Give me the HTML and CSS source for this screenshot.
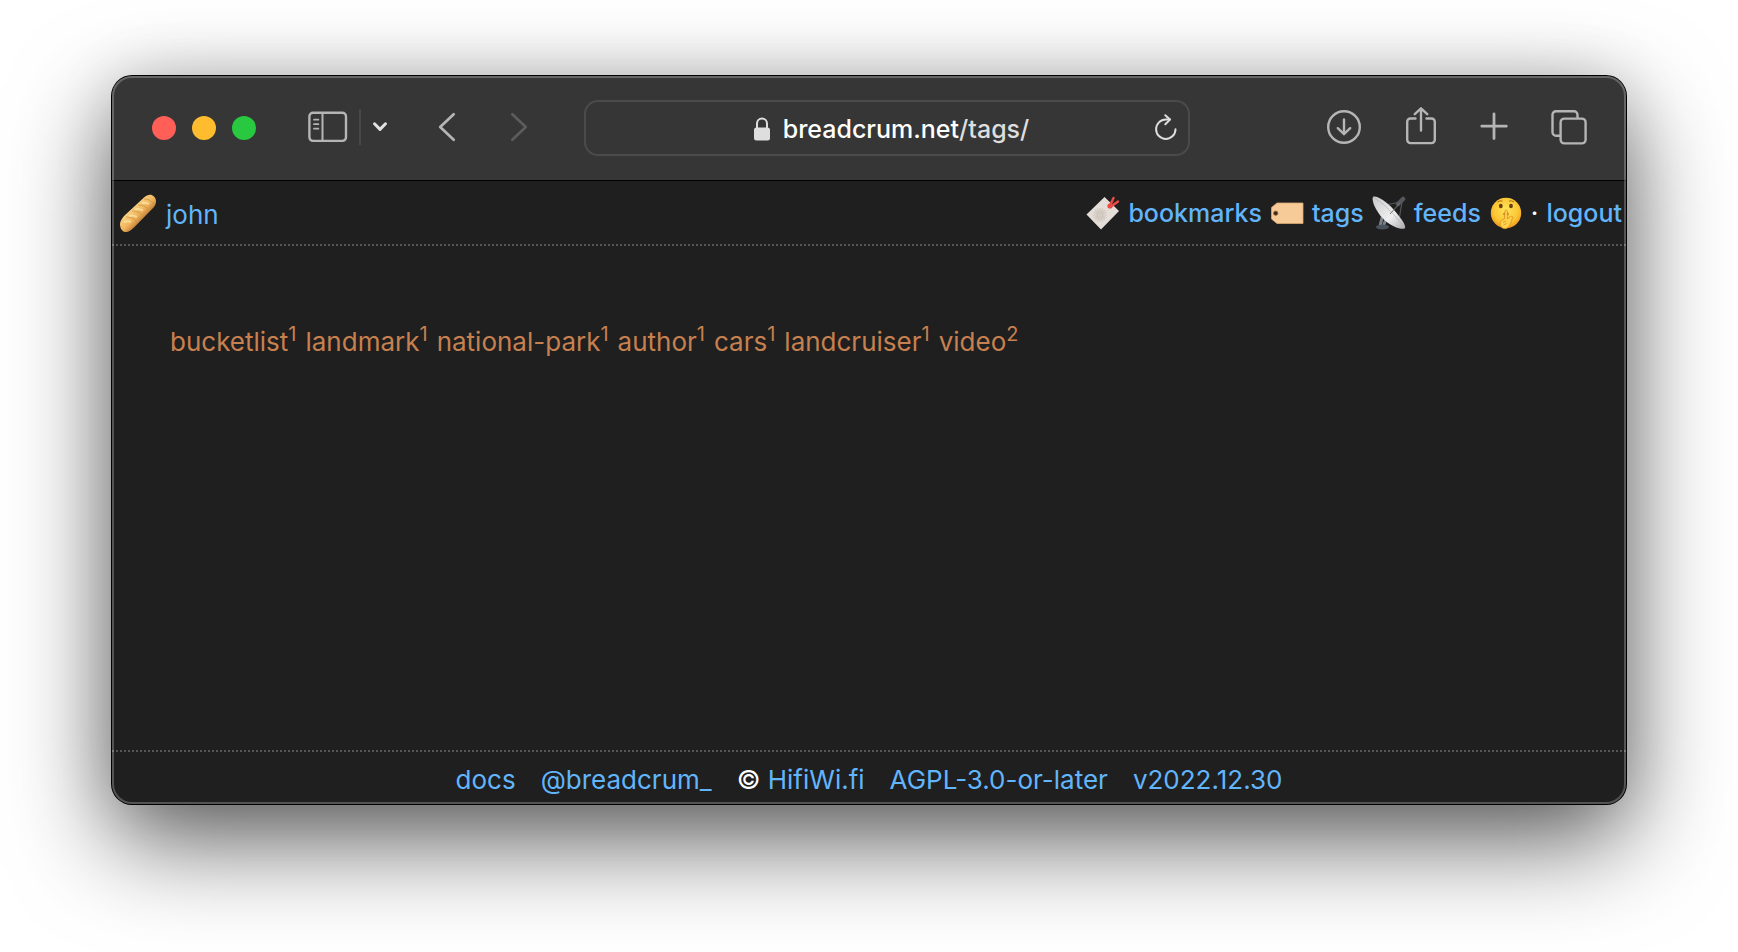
FILE: index.html
```html
<!DOCTYPE html>
<html lang="en">
<head>
<meta charset="utf-8">
<title>Tags</title>
<link rel="stylesheet" href="styles.css">
</head>
<body>
<div class="window">
  <div class="toolbar">
    <div class="lights">
      <button class="light light-close" aria-label="Close"></button>
      <button class="light light-minimize" aria-label="Minimize"></button>
      <button class="light light-zoom" aria-label="Zoom"></button>
    </div>
    <div class="sidebar-tools">
      <button class="tool" aria-label="Show sidebar">
        <svg width="40" height="32" viewBox="0 0 40 32" fill="none" stroke="#b5b5b5" stroke-width="2.4" stroke-linecap="round"><rect x="1.4" y="1.7" width="36.600" height="28.2" rx="3.6"/><path d="M14.5 2v28" stroke-width="2"/><path d="M6 8.7h4.4M6 13.2h4.4M6 17.7h4.4" stroke-width="1.7"/></svg>
      </button>
      <span class="divider"></span>
      <button class="tool" aria-label="Sidebar menu">
        <svg width="16" height="12" viewBox="0 0 16 12" fill="none" stroke="#e2e2e2" stroke-width="3" stroke-linecap="round" stroke-linejoin="round"><path d="M2.5 2.8L8 8.4l5.500-5.600"/></svg>
      </button>
    </div>
    <div class="history">
      <button class="tool" aria-label="Back">
        <svg width="18" height="30" viewBox="0 0 18 30" fill="none" stroke="#b5b5b5" stroke-width="2.700" stroke-linecap="round" stroke-linejoin="round"><path d="M15.700 2.200L2.200 15l13.500 12.800"/></svg>
      </button>
      <button class="tool" aria-label="Forward" disabled>
        <svg width="18" height="30" viewBox="0 0 18 30" fill="none" stroke="#5c5c5c" stroke-width="2.700" stroke-linecap="round" stroke-linejoin="round"><path d="M2.300 2.200L15.800 15L2.300 27.800"/></svg>
      </button>
    </div>
    <div class="address">
      <button class="address-text" aria-label="Address">
        <svg width="18" height="24" viewBox="0 0 18 24"><rect x="1" y="10.500" width="16" height="13" rx="2.500" fill="#dedede"/><path d="M4 11.500V6.600a5 5 0 0 1 10 0v4.900" fill="none" stroke="#dedede" stroke-width="2"/></svg>
        <span>breadcrum.net<span class="path">/tags/</span></span>
      </button>
      <button class="tool" aria-label="Reload">
        <svg width="24" height="28" viewBox="0 0 24 28" fill="none" stroke="#dedede" stroke-width="2" stroke-linecap="round" stroke-linejoin="round"><path d="M21.500 15.200a9.700 9.700 0 1 1-9.700-9.700h4"/><path d="M11.300 1.200l4.700 4.400-4.700 4.700"/></svg>
      </button>
    </div>
    <div class="actions">
      <button class="tool" aria-label="Downloads">
        <svg width="36" height="38" viewBox="0 0 36 38" fill="none" stroke="#b5b5b5" stroke-width="2.400" stroke-linecap="round" stroke-linejoin="round"><circle cx="18" cy="20" r="15.800"/><path d="M18 12.500v14M11.800 21.200l6.200 6 6.200-6"/></svg>
      </button>
      <button class="tool" aria-label="Share">
        <svg width="32" height="38" viewBox="0 0 32 38" fill="none" stroke="#b5b5b5" stroke-width="2.400" stroke-linecap="round" stroke-linejoin="round"><path d="M10.500 11.500H5.500a3.300 3.300 0 0 0-3.300 3.300v18a3.300 3.300 0 0 0 3.300 3.300h21a3.300 3.300 0 0 0 3.300-3.300v-18a3.300 3.300 0 0 0-3.300-3.300h-5"/><path d="M16 23.500V1.500M9.800 7.200L16 1.300l6.200 5.900"/></svg>
      </button>
      <button class="tool" aria-label="New tab">
        <svg width="28" height="38" viewBox="0 0 28 38" fill="none" stroke="#b5b5b5" stroke-width="2.800" stroke-linecap="round"><path d="M14 7v24.500M1.800 19.200h24.500"/></svg>
      </button>
      <button class="tool" aria-label="Tab overview">
        <svg width="36" height="38" viewBox="0 0 36 38" fill="none" stroke="#b5b5b5" stroke-width="2.400"><rect x="9.600" y="11.600" width="25" height="24.800" rx="3.800"/><path d="M9.600 28.800H5a3.500 3.500 0 0 1-3.500-3.500V8A3.500 3.500 0 0 1 5 4.300h18a3.500 3.500 0 0 1 3.500 3.500v3.800"/></svg>
      </button>
    </div>
  </div>

  <header class="site-header">
    <a class="user" href="#">
      <svg width="40" height="40" viewBox="0 0 40 40">
        <defs><linearGradient id="crust" x1="0" y1="0" x2="1" y2="1"><stop offset=".3" stop-color="#fbd98c"/><stop offset=".52" stop-color="#eeb35a"/><stop offset=".72" stop-color="#a95f24"/></linearGradient></defs>
        <path d="M2 31c0-3 2-5 4-8L26 4.500C30 1 33.500 1 36 3.500S39 10 36 14L16 34.500c-3 3-6 5-9 4.500S2 35 2 31z" fill="url(#crust)"/>
        <path d="M8 24c4 0 8 1 10 4M14 18c4 0 8 1 10 4M20 12c4 0 8 1 10 4M26 6c4 0 7 1 9 4" fill="none" stroke="#d08c40" stroke-width="1" opacity=".7"/>
        <path d="M6 29c3-1 5-1 7 0M11 23c3-1 6 0 8 1M17 16.500c3-1 6 0 8 1M24 10c3-1 5 0 7 1" fill="none" stroke="#fff0bc" stroke-width="2" opacity=".6"/>
      </svg>
      <span class="user-name">john</span>
    </a>
    <nav class="site-nav">
      <svg width="34" height="36" viewBox="1 0 34 36"><path d="M19.500 2L34 16 16 34.500 1.500 19.500z" fill="#e5ded8"/><g stroke="#cfc6bd" stroke-width="1.200"><path d="M15 13v14M8 20h14M10 15l10 10M20 15L10 25M12.300 13.500l5.400 13M17.700 13.500l-5.400 13M8.500 17.300l13 5.400M8.500 22.700l13-5.400"/></g><circle cx="15" cy="20" r="2.500" fill="#d4cbc2"/><path d="M25 10.500L28.500 3M26 11.500l7-5" stroke="#ea4b45" stroke-width="2.500" stroke-linecap="round"/><circle cx="25" cy="11" r="2.600" fill="#ea4b45"/></svg>
      <a href="#">bookmarks</a>
      <svg width="34" height="36" viewBox="1 0 34 36"><path d="M8 8h26v20.500H8L2.500 24V12.500z" fill="#f7cb98" stroke="#dca773" stroke-width=".8"/><circle cx="6.700" cy="18.200" r="2.300" fill="#3c2a20" stroke="#b97e4b" stroke-width=".8"/></svg>
      <a href="#">tags</a>
      <svg width="34" height="36" viewBox="1 0 34 36">
        <defs><linearGradient id="dish" x1="0" y1="0" x2="1" y2="1"><stop stop-color="#c9c9cb"/><stop offset=".6" stop-color="#efeff0"/><stop offset="1" stop-color="#a9a9ac"/></linearGradient></defs>
        <path d="M12 19l-3 12M15 24l-3 8" stroke="#7d838b" stroke-width="3"/><ellipse cx="11.500" cy="32" rx="6.500" ry="2.600" fill="#48525d"/>
        <path d="M15 10L29 7M28 25L31 7" stroke="#55555a" stroke-width="1.200"/><path d="M27 9l5-5" stroke="#54575b" stroke-width="4.500" stroke-linecap="round"/>
        <path d="M2 2c3-2 13 4 21 13s13 17 10.500 18.500S20 32 11.500 23 .5 4 2 2z" fill="url(#dish)"/><path d="M2.500 2.500C10 6 27 22 33 33" stroke="#b0b0b4" stroke-width=".7" fill="none"/><path d="M19 19L29 8" stroke="#77797d" stroke-width="1"/>
      </svg>
      <a href="#">feeds</a>
      <svg width="34" height="36" viewBox="1 0 34 36">
        <defs><radialGradient id="face" cx=".5" cy=".4" r=".6"><stop stop-color="#ffe45a"/><stop offset=".7" stop-color="#fcc432"/><stop offset="1" stop-color="#ee9820"/></radialGradient></defs>
        <circle cx="18" cy="18" r="15.200" fill="url(#face)"/><ellipse cx="12.800" cy="11" rx="1.900" ry="2.300" fill="#67400d"/><ellipse cx="23" cy="11" rx="1.900" ry="2.300" fill="#67400d"/><path d="M9.500 7q2.500-2 5-.8M21 6.200q2.500-1.200 5 .8" stroke="#a86a17" fill="none"/>
        <ellipse cx="18" cy="19" rx="2.800" ry="1.500" fill="#a55f1a"/>
        <path d="M16.800 16.500c0-2 2.600-2 2.600 0v7.500c3-3 6-3.500 5-1-.5 2-1.500 5-2.500 7-2 4-6 4.500-8 2.500-2.500-2.500-2-6 0-7.500l2.500-1z" fill="#ffd24a" stroke="#d88f22" stroke-width=".8"/><path d="M15 27.500l3-1.500M15.500 30l3-1.500" stroke="#d99129" stroke-width=".8"/>
      </svg>
      <span>·</span>
      <a href="#">logout</a>
    </nav>
  </header>

  <main class="tags">
    <a href="#">bucketlist<sup>1</sup></a>
    <a href="#">landmark<sup>1</sup></a>
    <a href="#">national-park<sup>1</sup></a>
    <a href="#">author<sup>1</sup></a>
    <a href="#">cars<sup>1</sup></a>
    <a href="#">landcruiser<sup>1</sup></a>
    <a href="#">video<sup>2</sup></a>
  </main>

  <footer class="site-footer">
    <a href="#">docs</a>
    <a href="#">@breadcrum_</a>
    <span>© <a href="#">HifiWi.fi</a></span>
    <a href="#">AGPL-3.0-or-later</a>
    <a href="#">v2022.12.30</a>
  </footer>
</div>
</body>
</html>
```

FILE: styles.css
```css
* {
  box-sizing: border-box;
}

body {
  display: flex;
  min-height: 100vh;
  margin: 0;
  padding: 76px 112px 148px;
  background: #fff;
  color: #fff;
  font: 26px/32px Inter, "Liberation Sans", sans-serif;
}

a {
  color: #62b5fb;
  text-decoration: none;
}

button {
  padding: 0;
  border: 0;
  background: none;
  color: inherit;
  font: inherit;
}

svg {
  display: block;
  flex: none;
}

.window {
  position: relative;
  display: flex;
  flex: 1;
  flex-direction: column;
  border-radius: 20px;
  background: #1f1f1f;
  box-shadow: 0 0 0 1px #000, 0 36px 100px rgba(0, 0, 0, 0.64), 0 0 60px rgba(0, 0, 0, 0.12);
}

.window::after {
  position: absolute;
  inset: 0;
  border: 2px solid rgba(255, 255, 255, 0.24);
  border-radius: 20px;
  content: "";
  pointer-events: none;
}

.toolbar {
  display: flex;
  align-items: center;
  height: 105px;
  padding: 0 39px 0 40px;
  border-bottom: 1px solid #000;
  border-radius: 20px 20px 0 0;
  background: #363636;
}

.lights {
  display: flex;
  gap: 16px;
}

.light {
  width: 24px;
  height: 24px;
  border-radius: 50%;
}

.light-close {
  background: #ff5f57;
}

.light-minimize {
  background: #febc2e;
}

.light-zoom {
  background: #28c840;
}

.sidebar-tools {
  display: flex;
  align-items: center;
  gap: 11px;
  margin-left: 52px;
  padding-bottom: 2px;
}

.divider {
  width: 2px;
  height: 36px;
  background: #484848;
}

.history {
  display: flex;
  gap: 54px;
  margin-left: 50px;
  padding-bottom: 2px;
}

.address {
  display: flex;
  flex: 1;
  align-items: center;
  height: 56px;
  margin: 0 136px 0 56px;
  padding: 0 10px 0 42px;
  border: 2px solid #4b4b4b;
  border-radius: 14px;
}

.address-text {
  display: flex;
  flex: 1;
  align-items: center;
  justify-content: center;
  gap: 12px;
  padding-top: 2px;
  font-size: 25px;
  font-weight: 500;
}

.path {
  color: #dedede;
}

.actions {
  display: flex;
  gap: 43px;
  padding-bottom: 4px;
}

.site-header {
  display: flex;
  align-items: center;
  justify-content: space-between;
  height: 65px;
  padding: 0 4px 0 6px;
  border-bottom: 2px dotted #555;
}

.user {
  display: flex;
  align-items: center;
  gap: 8px;
}

.user-name {
  padding-top: 4px;
}

.site-nav {
  display: flex;
  align-items: center;
  gap: 8px;
  font-size: 25px;
  font-weight: 500;
}

.tags {
  display: flex;
  flex: 1;
  flex-wrap: wrap;
  align-content: flex-start;
  gap: 9px;
  padding: 80px 58px;
}

.tags a {
  color: #c7804f;
}

.tags sup {
  font-size: 20px;
  line-height: 0;
}

.site-footer {
  display: flex;
  flex-wrap: wrap;
  justify-content: center;
  gap: 25px;
  padding: 12px 16px 8px;
  border-top: 2px dotted #555;
}
```
